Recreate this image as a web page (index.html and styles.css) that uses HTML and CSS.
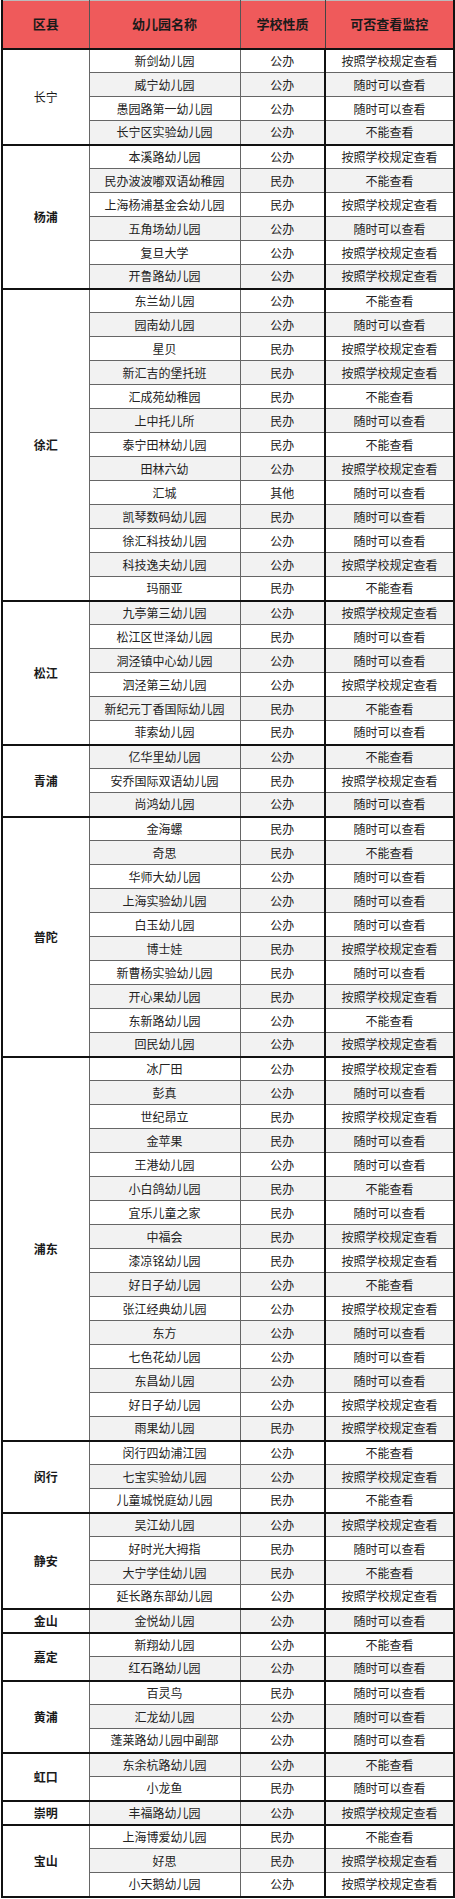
FILE: index.html
```html
<!DOCTYPE html>
<html lang="zh">
<head>
<meta charset="utf-8">
<link rel="stylesheet" href="styles.css">
</head>
<body>
<table class="tbl">
<colgroup><col class="w1"><col class="w2"><col class="w3"><col class="w4"></colgroup>
<thead>
<tr class="hd"><th>区县</th><th>幼儿园名称</th><th class="c2">学校性质</th><th>可否查看监控</th></tr>
</thead>
<tbody>
<tr class="g"><td class="gr thin" rowspan="4">长宁</td><td class="c">新剑幼儿园</td><td class="c2">公办</td><td class="c4">按照学校规定查看</td></tr>
<tr class="o"><td class="c">威宁幼儿园</td><td class="c2">公办</td><td class="c4">随时可以查看</td></tr>
<tr><td class="c">愚园路第一幼儿园</td><td class="c2">公办</td><td class="c4">随时可以查看</td></tr>
<tr class="o"><td class="c">长宁区实验幼儿园</td><td class="c2">公办</td><td class="c4">不能查看</td></tr>

<tr class="g"><td class="gr" rowspan="6">杨浦</td><td class="c">本溪路幼儿园</td><td class="c2">公办</td><td class="c4">按照学校规定查看</td></tr>
<tr class="o"><td class="c">民办波波嘟双语幼稚园</td><td class="c2">民办</td><td class="c4">不能查看</td></tr>
<tr><td class="c">上海杨浦基金会幼儿园</td><td class="c2">民办</td><td class="c4">按照学校规定查看</td></tr>
<tr class="o"><td class="c">五角场幼儿园</td><td class="c2">公办</td><td class="c4">随时可以查看</td></tr>
<tr><td class="c">复旦大学</td><td class="c2">公办</td><td class="c4">按照学校规定查看</td></tr>
<tr class="o"><td class="c">开鲁路幼儿园</td><td class="c2">公办</td><td class="c4">按照学校规定查看</td></tr>

<tr class="g"><td class="gr" rowspan="13">徐汇</td><td class="c">东兰幼儿园</td><td class="c2">公办</td><td class="c4">不能查看</td></tr>
<tr class="o"><td class="c">园南幼儿园</td><td class="c2">公办</td><td class="c4">随时可以查看</td></tr>
<tr><td class="c">星贝</td><td class="c2">民办</td><td class="c4">按照学校规定查看</td></tr>
<tr class="o"><td class="c">新汇吉的堡托班</td><td class="c2">民办</td><td class="c4">按照学校规定查看</td></tr>
<tr><td class="c">汇成苑幼稚园</td><td class="c2">民办</td><td class="c4">不能查看</td></tr>
<tr class="o"><td class="c">上中托儿所</td><td class="c2">民办</td><td class="c4">随时可以查看</td></tr>
<tr><td class="c">泰宁田林幼儿园</td><td class="c2">民办</td><td class="c4">不能查看</td></tr>
<tr class="o"><td class="c">田林六幼</td><td class="c2">公办</td><td class="c4">按照学校规定查看</td></tr>
<tr><td class="c">汇城</td><td class="c2">其他</td><td class="c4">随时可以查看</td></tr>
<tr class="o"><td class="c">凯琴数码幼儿园</td><td class="c2">民办</td><td class="c4">随时可以查看</td></tr>
<tr><td class="c">徐汇科技幼儿园</td><td class="c2">公办</td><td class="c4">随时可以查看</td></tr>
<tr class="o"><td class="c">科技逸夫幼儿园</td><td class="c2">公办</td><td class="c4">按照学校规定查看</td></tr>
<tr><td class="c">玛丽亚</td><td class="c2">民办</td><td class="c4">不能查看</td></tr>

<tr class="g o"><td class="gr" rowspan="6">松江</td><td class="c">九亭第三幼儿园</td><td class="c2">公办</td><td class="c4">按照学校规定查看</td></tr>
<tr><td class="c">松江区世泽幼儿园</td><td class="c2">民办</td><td class="c4">随时可以查看</td></tr>
<tr class="o"><td class="c">洞泾镇中心幼儿园</td><td class="c2">公办</td><td class="c4">随时可以查看</td></tr>
<tr><td class="c">泗泾第三幼儿园</td><td class="c2">公办</td><td class="c4">按照学校规定查看</td></tr>
<tr class="o"><td class="c">新纪元丁香国际幼儿园</td><td class="c2">民办</td><td class="c4">不能查看</td></tr>
<tr><td class="c">菲索幼儿园</td><td class="c2">民办</td><td class="c4">随时可以查看</td></tr>

<tr class="g o"><td class="gr" rowspan="3">青浦</td><td class="c">亿华里幼儿园</td><td class="c2">公办</td><td class="c4">不能查看</td></tr>
<tr><td class="c">安乔国际双语幼儿园</td><td class="c2">民办</td><td class="c4">按照学校规定查看</td></tr>
<tr class="o"><td class="c">尚鸿幼儿园</td><td class="c2">公办</td><td class="c4">随时可以查看</td></tr>

<tr class="g"><td class="gr" rowspan="10">普陀</td><td class="c">金海螺</td><td class="c2">民办</td><td class="c4">随时可以查看</td></tr>
<tr class="o"><td class="c">奇思</td><td class="c2">民办</td><td class="c4">不能查看</td></tr>
<tr><td class="c">华师大幼儿园</td><td class="c2">公办</td><td class="c4">随时可以查看</td></tr>
<tr class="o"><td class="c">上海实验幼儿园</td><td class="c2">公办</td><td class="c4">随时可以查看</td></tr>
<tr><td class="c">白玉幼儿园</td><td class="c2">公办</td><td class="c4">随时可以查看</td></tr>
<tr class="o"><td class="c">博士娃</td><td class="c2">民办</td><td class="c4">按照学校规定查看</td></tr>
<tr><td class="c">新曹杨实验幼儿园</td><td class="c2">民办</td><td class="c4">随时可以查看</td></tr>
<tr class="o"><td class="c">开心果幼儿园</td><td class="c2">民办</td><td class="c4">按照学校规定查看</td></tr>
<tr><td class="c">东新路幼儿园</td><td class="c2">公办</td><td class="c4">不能查看</td></tr>
<tr class="o"><td class="c">回民幼儿园</td><td class="c2">公办</td><td class="c4">按照学校规定查看</td></tr>

<tr class="g"><td class="gr" rowspan="16">浦东</td><td class="c">冰厂田</td><td class="c2">公办</td><td class="c4">按照学校规定查看</td></tr>
<tr class="o"><td class="c">彭真</td><td class="c2">公办</td><td class="c4">随时可以查看</td></tr>
<tr><td class="c">世纪昂立</td><td class="c2">民办</td><td class="c4">按照学校规定查看</td></tr>
<tr class="o"><td class="c">金苹果</td><td class="c2">民办</td><td class="c4">随时可以查看</td></tr>
<tr><td class="c">王港幼儿园</td><td class="c2">公办</td><td class="c4">随时可以查看</td></tr>
<tr class="o"><td class="c">小白鸽幼儿园</td><td class="c2">民办</td><td class="c4">不能查看</td></tr>
<tr><td class="c">宜乐儿童之家</td><td class="c2">民办</td><td class="c4">随时可以查看</td></tr>
<tr class="o"><td class="c">中福会</td><td class="c2">民办</td><td class="c4">按照学校规定查看</td></tr>
<tr><td class="c">漆凉铭幼儿园</td><td class="c2">民办</td><td class="c4">按照学校规定查看</td></tr>
<tr class="o"><td class="c">好日子幼儿园</td><td class="c2">公办</td><td class="c4">不能查看</td></tr>
<tr><td class="c">张江经典幼儿园</td><td class="c2">公办</td><td class="c4">按照学校规定查看</td></tr>
<tr class="o"><td class="c">东方</td><td class="c2">公办</td><td class="c4">随时可以查看</td></tr>
<tr><td class="c">七色花幼儿园</td><td class="c2">公办</td><td class="c4">随时可以查看</td></tr>
<tr class="o"><td class="c">东昌幼儿园</td><td class="c2">公办</td><td class="c4">随时可以查看</td></tr>
<tr><td class="c">好日子幼儿园</td><td class="c2">公办</td><td class="c4">按照学校规定查看</td></tr>
<tr class="o"><td class="c">雨果幼儿园</td><td class="c2">民办</td><td class="c4">按照学校规定查看</td></tr>

<tr class="g"><td class="gr" rowspan="3">闵行</td><td class="c">闵行四幼浦江园</td><td class="c2">公办</td><td class="c4">不能查看</td></tr>
<tr class="o"><td class="c">七宝实验幼儿园</td><td class="c2">公办</td><td class="c4">按照学校规定查看</td></tr>
<tr><td class="c">儿童城悦庭幼儿园</td><td class="c2">民办</td><td class="c4">不能查看</td></tr>

<tr class="g o"><td class="gr" rowspan="4">静安</td><td class="c">吴江幼儿园</td><td class="c2">公办</td><td class="c4">按照学校规定查看</td></tr>
<tr><td class="c">好时光大拇指</td><td class="c2">民办</td><td class="c4">随时可以查看</td></tr>
<tr class="o"><td class="c">大宁学佳幼儿园</td><td class="c2">民办</td><td class="c4">不能查看</td></tr>
<tr><td class="c">延长路东部幼儿园</td><td class="c2">公办</td><td class="c4">按照学校规定查看</td></tr>

<tr class="g o"><td class="gr">金山</td><td class="c">金悦幼儿园</td><td class="c2">公办</td><td class="c4">随时可以查看</td></tr>

<tr class="g"><td class="gr" rowspan="2">嘉定</td><td class="c">新翔幼儿园</td><td class="c2">公办</td><td class="c4">不能查看</td></tr>
<tr class="o"><td class="c">红石路幼儿园</td><td class="c2">公办</td><td class="c4">随时可以查看</td></tr>

<tr class="g"><td class="gr" rowspan="3">黄浦</td><td class="c">百灵鸟</td><td class="c2">民办</td><td class="c4">随时可以查看</td></tr>
<tr class="o"><td class="c">汇龙幼儿园</td><td class="c2">公办</td><td class="c4">随时可以查看</td></tr>
<tr><td class="c">蓬莱路幼儿园中副部</td><td class="c2">公办</td><td class="c4">随时可以查看</td></tr>

<tr class="g o"><td class="gr" rowspan="2">虹口</td><td class="c">东余杭路幼儿园</td><td class="c2">公办</td><td class="c4">不能查看</td></tr>
<tr><td class="c">小龙鱼</td><td class="c2">民办</td><td class="c4">随时可以查看</td></tr>

<tr class="g o"><td class="gr">崇明</td><td class="c">丰福路幼儿园</td><td class="c2">公办</td><td class="c4">按照学校规定查看</td></tr>

<tr class="g"><td class="gr" rowspan="3">宝山</td><td class="c">上海博爱幼儿园</td><td class="c2">民办</td><td class="c4">不能查看</td></tr>
<tr class="o"><td class="c">好思</td><td class="c2">民办</td><td class="c4">按照学校规定查看</td></tr>
<tr class="last"><td class="c">小天鹅幼儿园</td><td class="c2">公办</td><td class="c4">按照学校规定查看</td></tr>
</tbody>
</table>
</body>
</html>
```
FILE: styles.css
```css
html, body {
  margin: 0;
  padding: 0;
  background: #ffffff;
}
body {
  padding: 0 0 0 1px;
  font-family: "Noto Sans CJK SC", "Noto Sans", sans-serif;
  color: #222222;
}
.tbl {
  border-collapse: collapse;
  table-layout: fixed;
  width: 452px;
  border-left: 2px solid #111;
  border-right: 2px solid #111;
  border-bottom: 2px solid #111;
}
.w1 { width: 87px; }
.w2 { width: 151px; }
.w3 { width: 85px; }
.w4 { width: 129px; }
.tbl th, .tbl td {
  box-sizing: border-box;
  padding: 0;
  text-align: center;
  vertical-align: middle;
  white-space: nowrap;
  overflow: hidden;
}
.hd th {
  height: 48px;
  background: #ef5a5b;
  font-size: 13px;
  line-height: 16px;
  font-weight: 700;
  color: #1a1a1a;
  border: 1px solid #555;
  border-top: 1px solid #bbb;
}
.hd th.c2 { border-right: 1px solid #444; }
.tbl td {
  height: 24px;
  font-size: 12px;
  line-height: 14px;
  border: 1px solid #666;
  background: #ffffff;
}
.tbl tr.o td.c,
.tbl tr.o td.c2,
.tbl tr.o td.c4 { background: #f2f2f2; }
.tbl td.c2 { border-right: 2px solid #111; }
.tbl td.c4 { border-right: 2px solid #111; }
.tbl tr.g td { border-top: 2px solid #111; }
.tbl td.gr {
  background: #ffffff;
  font-weight: 700;
  color: #1a1a1a;
  border-left: 2px solid #111;
}
.tbl td.gr.thin { font-weight: 400; }
.tbl tr.last td { border-bottom: 2px solid #111; }
```
